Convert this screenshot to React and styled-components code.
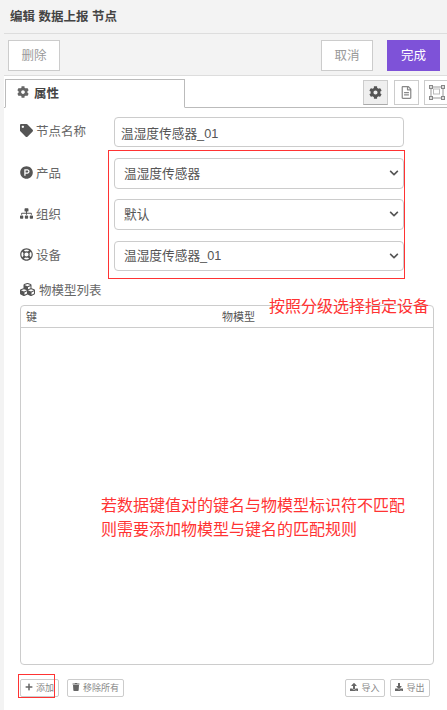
import React from "react";
import styled, { createGlobalStyle } from "styled-components";
import {
  FaCog,
  FaTag,
  FaProductHunt,
  FaSitemap,
  FaRegLifeRing,
  FaCubes,
  FaPlus,
  FaTrash,
  FaUpload,
  FaDownload,
  FaRegFileAlt,
  FaChevronDown,
} from "react-icons/fa";

const FONT = `"Liberation Sans", "Noto Sans CJK SC", sans-serif`;

const GlobalStyle = createGlobalStyle`
  html, body {
    margin: 0;
    height: 100%;
    overflow: hidden;
    background: #fff;
  }
  * {
    box-sizing: border-box;
  }
`;

const Tray = styled.div`
  position: relative;
  width: 447px;
  height: 710px;
  overflow: hidden;
  font-family: ${FONT};
  color: #555;
  background: #fff;
  border-left: 4px solid #f3f3f3;
  display: flex;
  flex-direction: column;
`;

const Title = styled.div`
  height: 34px;
  margin-left: -4px;
  padding: 0 10px 2px;
  display: flex;
  align-items: center;
  background: #f3f3f3;
  border-bottom: 1px solid #ddd;
  color: #444;
  font-size: 12.5px;
  font-weight: 700;
`;

const Toolbar = styled.div`
  height: 42px;
  margin-left: -4px;
  padding: 6px 7px 0 8px;
  display: flex;
  align-items: flex-start;
  gap: 14px;
  background: #f3f3f3;
  border-bottom: 1px solid #ddd;
`;

const TrayButton = styled.button`
  height: 31px;
  width: ${(p) => p.$width}px;
  padding: 0 0 2px;
  margin-left: ${(p) => (p.$push ? "auto" : "0")};
  font-family: ${FONT};
  font-size: 12.5px;
  color: ${(p) => (p.$primary ? "#fff" : "#999")};
  background: ${(p) => (p.$primary ? "#7e52d8" : "#fff")};
  border: 1px solid ${(p) => (p.$primary ? "#7e52d8" : "#ccc")};
`;

const TabBar = styled.div`
  height: 32px;
  padding-left: 1px;
  display: flex;
  align-items: flex-end;
  border-bottom: 1px solid #bbb;
`;

const Tab = styled.div`
  width: 180px;
  height: 29px;
  margin-bottom: -1px;
  padding: 0 0 3px 11px;
  display: flex;
  align-items: center;
  gap: 5px;
  background: #fff;
  border: 1px solid #bbb;
  border-bottom: 1px solid #fff;
  font-size: 12.5px;
  font-weight: 700;
  color: #444;
  svg {
    color: #666;
  }
`;

const TabTools = styled.div`
  margin-left: auto;
  margin-right: -2px;
  margin-top: 4px;
  align-self: flex-start;
  display: flex;
  gap: 5px;
`;

const TabTool = styled.div`
  width: 25px;
  height: 25px;
  margin-right: ${(p) => (p.$active ? "1px" : "0")};
  display: flex;
  align-items: center;
  justify-content: center;
  background: ${(p) => (p.$active ? "#efefef" : "#fff")};
  border: 1px solid #ccc;
  border-bottom-color: ${(p) => (p.$active ? "#aaa" : "#ccc")};
  color: ${(p) => (p.$active ? "#555" : "#888")};
  font-size: 13px;
`;

const Body = styled.div`
  flex: 1;
  padding: 9px 13px 0 16px;
  display: flex;
  flex-direction: column;
`;

const Row = styled.div`
  height: ${(p) => p.$height}px;
  margin-bottom: ${(p) => p.$gap}px;
  padding-right: 30px;
  display: grid;
  grid-template-columns: 94px 1fr;
  align-items: center;
`;

const Label = styled.label`
  padding-bottom: 3px;
  display: flex;
  align-items: center;
  gap: 3px;
  font-size: 12.5px;
  color: #666;
  svg {
    color: #555;
    font-size: 13px;
    flex: none;
  }
`;

const Input = styled.div`
  height: 100%;
  padding: 0 6px;
  display: flex;
  align-items: center;
  background: #fff;
  border: 1px solid #ccc;
  border-radius: 4px;
  font-size: 12.7px;
  color: #555;
`;

const SelectBox = styled(Input)`
  position: relative;
  padding: 0 9px 3px;
  svg {
    position: absolute;
    right: 4px;
    top: 9px;
    font-size: 10px;
    color: #555;
  }
`;

const ListLabel = styled(Label)`
  height: 20px;
  margin-bottom: 5px;
  padding-bottom: 2px;
  gap: 4px;
  svg {
    font-size: 15px;
  }
`;

const ListTable = styled.div`
  width: 414px;
  height: 360px;
  background: #fff;
  border: 1px solid #ccc;
  border-radius: 4px;
`;

const ListHead = styled.div`
  height: 22px;
  padding: 0 0 2px 5px;
  display: grid;
  grid-template-columns: 196px 1fr;
  align-items: center;
  border-bottom: 1px solid #ccc;
  font-size: 11px;
  color: #555;
`;

const Footer = styled.div`
  width: 410px;
  margin-top: 14px;
  display: flex;
  justify-content: space-between;
`;

const ButtonGroup = styled.div`
  display: flex;
  gap: ${(p) => p.$gap}px;
`;

const SmallButton = styled.button`
  width: ${(p) => p.$width}px;
  height: 18px;
  padding: 0 0 2px;
  display: flex;
  align-items: center;
  justify-content: center;
  gap: 3px;
  font-family: ${FONT};
  font-size: 9px;
  color: #888;
  background: #fff;
  border: 1px solid #ccc;
  border-radius: 2px;
  svg {
    font-size: 8px;
    color: #666;
    flex: none;
  }
`;

const RedBox = styled.div`
  position: absolute;
  left: ${(p) => p.$x - 4}px;
  top: ${(p) => p.$y}px;
  width: ${(p) => p.$w}px;
  height: ${(p) => p.$h}px;
  border: 1px solid #f33;
  pointer-events: none;
`;

const Note = styled.div`
  position: absolute;
  left: ${(p) => p.$x - 4}px;
  top: ${(p) => p.$y}px;
  font-size: 16px;
  line-height: 24px;
  color: #f33;
  white-space: nowrap;
`;

const FrameIcon = () => (
  <svg width="16" height="15" viewBox="0 0 16 15" fill="none">
    <rect x="2" y="2" width="12" height="11" stroke="#999" strokeWidth="1" />
    <rect x="4.5" y="4" width="6" height="5" stroke="#bbb" strokeWidth="1" />
    <rect x="0.5" y="0.5" width="3" height="3" fill="#ddd" stroke="#888" />
    <rect x="12.5" y="0.5" width="3" height="3" fill="#ddd" stroke="#888" />
    <rect x="0.5" y="11.5" width="3" height="3" fill="#ddd" stroke="#888" />
    <rect x="12.5" y="11.5" width="3" height="3" fill="#ddd" stroke="#888" />
  </svg>
);

const selects = [
  { label: "产品", icon: <FaProductHunt />, value: "温湿度传感器", height: 31, gap: 10 },
  { label: "组织", icon: <FaSitemap />, value: "默认", height: 31, gap: 11 },
  { label: "设备", icon: <FaRegLifeRing />, value: "温湿度传感器_01", height: 30, gap: 9 },
];

export default function App() {
  return (
    <>
      <GlobalStyle />
      <Tray>
        <Title>编辑 数据上报 节点</Title>
        <Toolbar>
          <TrayButton $width={52}>删除</TrayButton>
          <TrayButton $width={52} $push>取消</TrayButton>
          <TrayButton $width={53} $primary>完成</TrayButton>
        </Toolbar>
        <TabBar>
          <Tab>
            <FaCog size={12} />
            属性
          </Tab>
          <TabTools>
            <TabTool $active><FaCog /></TabTool>
            <TabTool><FaRegFileAlt /></TabTool>
            <TabTool><FrameIcon /></TabTool>
          </TabTools>
        </TabBar>
        <Body>
          <Row $height={30} $gap={11}>
            <Label><FaTag />节点名称</Label>
            <Input>温湿度传感器_01</Input>
          </Row>
          {selects.map((s) => (
            <Row key={s.label} $height={s.height} $gap={s.gap}>
              <Label>{s.icon}{s.label}</Label>
              <SelectBox>
                {s.value}
                <FaChevronDown />
              </SelectBox>
            </Row>
          ))}
          <ListLabel><FaCubes />物模型列表</ListLabel>
          <ListTable>
            <ListHead>
              <span>键</span>
              <span>物模型</span>
            </ListHead>
          </ListTable>
          <Footer>
            <ButtonGroup $gap={8}>
              <SmallButton $width={39}><FaPlus />添加</SmallButton>
              <SmallButton $width={57}><FaTrash />移除所有</SmallButton>
            </ButtonGroup>
            <ButtonGroup $gap={5}>
              <SmallButton $width={40}><FaUpload />导入</SmallButton>
              <SmallButton $width={40}><FaDownload />导出</SmallButton>
            </ButtonGroup>
          </Footer>
        </Body>
        <RedBox $x={108} $y={150} $w={297} $h={129} />
        <RedBox $x={18} $y={674} $w={37} $h={24} />
        <Note $x={269} $y={295}>按照分级选择指定设备</Note>
        <Note $x={101} $y={494}>
          若数据键值对的键名与物模型标识符不匹配
          <br />
          则需要添加物模型与键名的匹配规则
        </Note>
      </Tray>
    </>
  );
}
